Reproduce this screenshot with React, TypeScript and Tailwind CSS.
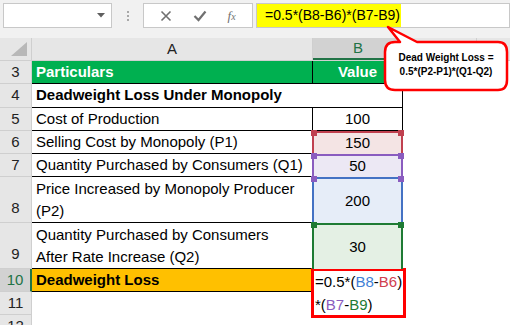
import React from 'react';

const rowHead = "w-[32px] shrink-0 flex items-center justify-center bg-[#e6e6e6] border-r border-b border-[#cfcfcf] text-[15px] text-[#222]";

function Corner({ c }: { c: string }) {
  return (
    <>
      <span className={`absolute -left-[3px] -top-[3px] w-[6px] h-[6px] ${c}`} />
      <span className={`absolute -right-[3px] -top-[3px] w-[6px] h-[6px] ${c}`} />
    </>
  );
}

export default function App() {
  return (
    <div className="relative w-[510px] h-[325px] overflow-hidden bg-white text-black" style={{ fontFamily: '"Liberation Sans", Arial, sans-serif' }}>
      {/* toolbar */}
      <div className="h-[38px] bg-[#f1f1f1] flex items-start pt-[3px] pl-[3px]">
        <div className="w-[109px] h-[25px] bg-white border border-[#c8c8c8] flex items-center justify-end pr-[6px]">
          <svg width="8" height="5" viewBox="0 0 8 5"><path d="M0 0 L8 0 L4 4.5 Z" fill="#5f5f5f" /></svg>
        </div>
        <div className="w-[31px] h-[25px] flex flex-col items-center justify-center gap-[2px]">
          <span className="w-[2px] h-[2px] bg-[#a8a8a8]" />
          <span className="w-[2px] h-[2px] bg-[#a8a8a8]" />
          <span className="w-[2px] h-[2px] bg-[#a8a8a8]" />
        </div>
        <div className="w-[110px] h-[25px] bg-white border border-[#c8c8c8] flex items-center justify-around px-[6px]">
          <svg width="12" height="12" viewBox="0 0 12 12"><path d="M1.5 1.5 L10.5 10.5 M10.5 1.5 L1.5 10.5" stroke="#707070" strokeWidth="1.6" /></svg>
          <svg width="14" height="12" viewBox="0 0 14 12"><path d="M1.5 6 L5.5 10 L12.5 1.5" stroke="#707070" strokeWidth="2.2" fill="none" /></svg>
          <span className="text-[13px] italic text-[#707070]" style={{ fontFamily: '"Liberation Serif", serif' }}>f<span className="text-[10px]">x</span></span>
        </div>
        <div className="ml-[3px] flex-1 h-[25px] bg-white border border-[#c8c8c8] flex items-center">
          <span className="h-full bg-[#ffff00] flex items-center pl-[8px] w-[144px] whitespace-nowrap text-[14px]">=0.5*(B8-B6)*(B7-B9)</span>
        </div>
      </div>

      {/* column headers */}
      <div className="h-[23px] flex bg-[#e6e6e6] border-b border-[#cfcfcf]">
        <div className="w-[32px] border-r border-[#cfcfcf] flex items-end justify-end pr-[4px] pb-[4px]">
          <svg width="16" height="14" viewBox="0 0 16 14"><path d="M16 0 L16 14 L0 14 Z" fill="#b8b8b8" /></svg>
        </div>
        <div className="w-[281px] border-r border-[#cfcfcf] flex items-center justify-center text-[15px] text-[#222]">A</div>
        <div className="w-[90px] bg-[#d2d2d2] border-b-2 border-[#217346] flex items-center justify-center text-[15px] text-[#217346]">B</div>
        <div className="w-[74px] border-r border-[#cfcfcf]" />
        <div className="flex-1" />
      </div>

      {/* row 3 */}
      <div className="h-[23px] flex">
        <div className={rowHead}>3</div>
        <div className="w-[281px] bg-[#00b050] border-r border-b border-black flex items-center pl-[4px] text-[15px] font-bold text-white">Particulars</div>
        <div className="w-[90px] bg-[#00b050] border-r border-b border-black flex items-center justify-center text-[15px] font-bold text-white">Value</div>
      </div>
      {/* row 4 */}
      <div className="h-[24px] flex">
        <div className={rowHead}>4</div>
        <div className="w-[371px] border-r border-b border-black flex items-center pl-[4px] text-[15px] font-bold">Deadweight Loss Under Monopoly</div>
      </div>
      {/* row 5 */}
      <div className="h-[23px] flex">
        <div className={rowHead}>5</div>
        <div className="w-[281px] border-r border-b border-black flex items-center pl-[4px] text-[15px]">Cost of Production</div>
        <div className="w-[90px] border-r border-b border-black flex items-center justify-center text-[15px]">100</div>
      </div>
      {/* row 6 */}
      <div className="h-[23px] flex">
        <div className={rowHead}>6</div>
        <div className="w-[281px] border-b border-black flex items-center pl-[4px] text-[15px]">Selling Cost by Monopoly (P1)</div>
        <div className="relative w-[91px] -ml-px bg-[#f4e4e4] border-2 border-b-0 border-[#c0404f] flex items-center justify-center text-[15px]">
          150
          <Corner c="bg-[#c0404f]" />
        </div>
      </div>
      {/* row 7 */}
      <div className="h-[23px] flex">
        <div className={rowHead}>7</div>
        <div className="w-[281px] border-b border-black flex items-center pl-[4px] text-[15px]">Quantity Purchased by Consumers (Q1)</div>
        <div className="relative w-[91px] -ml-px bg-[#ece8f4] border-2 border-b-0 border-[#8a5cbf] flex items-center justify-center text-[15px]">
          50
          <Corner c="bg-[#8a5cbf]" />
        </div>
      </div>
      {/* row 8 */}
      <div className="h-[46px] flex">
        <div className={`${rowHead} !items-end pb-[3px]`}>8</div>
        <div className="w-[281px] border-b border-black flex flex-col justify-center pl-[4px] text-[15px] leading-[22px]">
          <span>Price Increased by Monopoly Producer</span>
          <span>(P2)</span>
        </div>
        <div className="relative w-[91px] -ml-px bg-[#e6edf8] border-2 border-b-0 border-[#4472c4] flex items-center justify-center text-[15px]">
          200
          <Corner c="bg-[#8a5cbf]" />
        </div>
      </div>
      {/* row 9 */}
      <div className="h-[46px] flex">
        <div className={`${rowHead} !items-end pb-[3px]`}>9</div>
        <div className="w-[281px] border-b border-black flex flex-col justify-center pl-[4px] text-[15px] leading-[22px]">
          <span>Quantity Purchased by Consumers</span>
          <span>After Rate Increase (Q2)</span>
        </div>
        <div className="relative w-[91px] -ml-px bg-[#e4f0e4] border-2 border-b-0 border-[#1e7b34] flex items-center justify-center text-[15px]">
          30
          <Corner c="bg-[#1e7b34]" />
        </div>
      </div>
      {/* rows 10-11 */}
      <div className="flex">
        <div className="flex flex-col">
          <div className="h-[23px] flex">
            <div className="w-[32px] shrink-0 flex items-center justify-center bg-[#d2d2d2] border-r-2 border-b border-r-[#217346] border-b-[#cfcfcf] text-[15px] text-[#217346]">10</div>
            <div className="w-[281px] bg-[#ffc000] border-b border-black flex items-center pl-[4px] text-[15px] font-bold">Deadweight Loss</div>
          </div>
          <div className="h-[23px] flex">
            <div className={rowHead}>11</div>
          </div>
          <div className="h-[23px] flex">
            <div className={rowHead}>12</div>
          </div>
        </div>
        <div className="w-[95px] h-[50px] -ml-[2px] -mt-[1px] border-[3px] border-[#ff0000] flex flex-col justify-center pl-[1px] text-[15px] leading-[23px]">
          <span>=0.5*(<span className="text-[#3f7fd6]">B8</span>-<span className="text-[#d0404f]">B6</span>)</span>
          <span>*(<span className="text-[#8a5cbf]">B7</span>-<span className="text-[#1e7b34]">B9</span>)</span>
        </div>
      </div>

      {/* callout */}
      <svg className="absolute left-[380px] top-[24px]" width="130" height="70" viewBox="0 0 130 70">
        <path d="M15 18 L20 18 L8 3 L37 18 L118 18 Q127 18 127 28 L127 56 Q127 66 118 66 L15 66 Q5 66 5 56 L5 28 Q5 18 15 18 Z" fill="white" stroke="#ff0000" strokeWidth="2.5" strokeLinejoin="round" />
      </svg>
      <div className="absolute left-[386px] top-[51px] w-[120px] flex flex-col items-center text-[10px] font-bold leading-[14px] text-black">
        <span>Dead Weight Loss =</span>
        <span>0.5*(P2-P1)*(Q1-Q2)</span>
      </div>
    </div>
  );
}
